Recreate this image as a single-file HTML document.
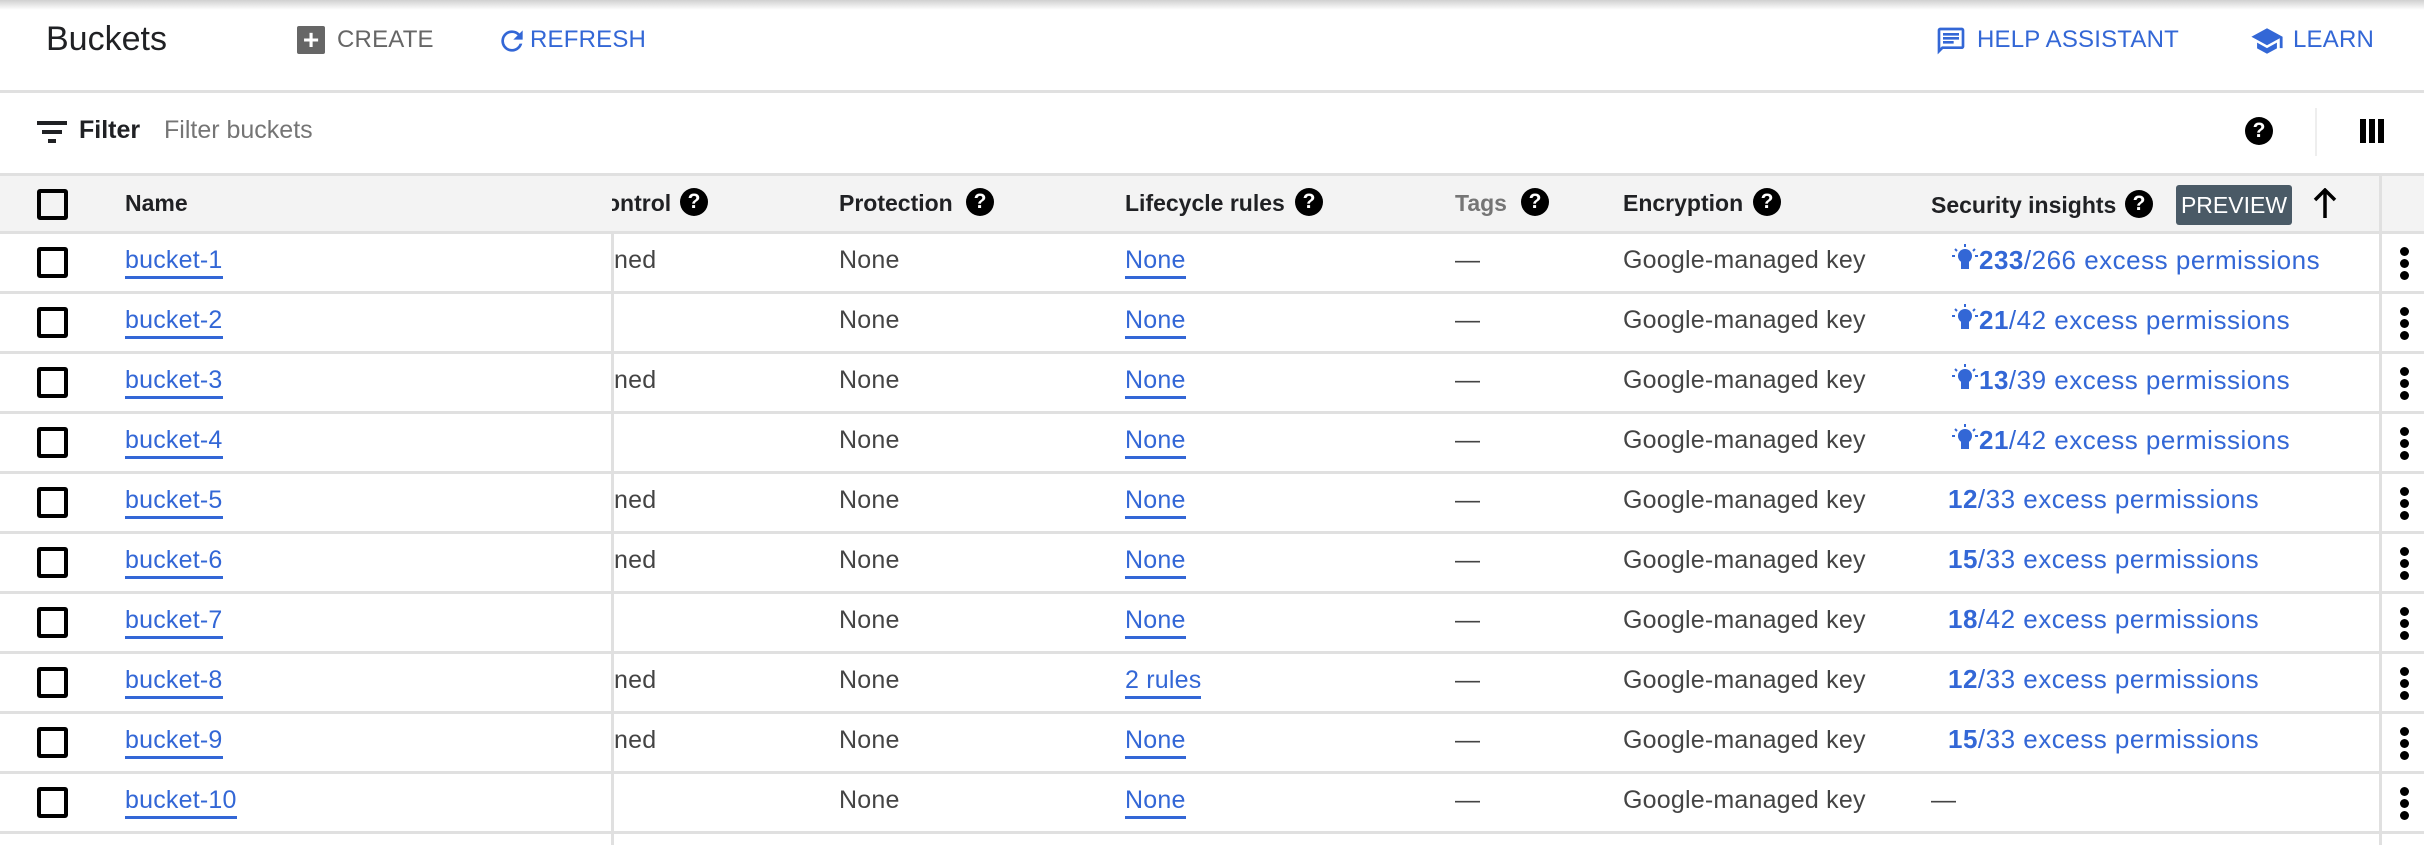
<!DOCTYPE html>
<html><head><meta charset="utf-8"><style>
*{box-sizing:border-box;margin:0;padding:0}
body{width:2424px;height:845px;overflow:hidden;background:#fff;font-family:"Liberation Sans",Arial,sans-serif;position:relative;color:#3c4043}
.a{position:absolute;white-space:nowrap}
.shadow{position:absolute;left:0;top:0;width:2424px;height:10px;background:linear-gradient(#d0d0d0,rgba(255,255,255,0))}
.hl{position:absolute;left:0;height:3px;width:2424px;background:#e0e0e0}
.blue{color:#3367d6}
.btn{font-size:24px;top:26px;letter-spacing:0.2px}
.q{position:absolute;width:28px;height:28px;border-radius:50%;background:#000;color:#fff;font-weight:bold;font-size:21px;text-align:center;line-height:28px}
.th{position:absolute;font-size:23px;font-weight:bold;color:#202124;top:190px}
.cb{position:absolute;left:37px;width:31px;height:31px;border:4px solid #000;border-radius:3px}
.row{position:absolute;left:0;width:2424px;height:60px;border-bottom:3px solid #e0e0e0}
.t{position:absolute;top:12px;font-size:25px;color:#444;white-space:nowrap;letter-spacing:0.2px}
.lk{color:#3367d6;border-bottom:3px solid #3367d6;padding-bottom:2px}
.sec{position:absolute;top:10px;font-size:26px;color:#3367d6;white-space:nowrap;letter-spacing:0.5px}
.keb{position:absolute;left:2400px;top:13px;width:10px}
.keb i{display:block;width:9px;height:9px;border-radius:50%;background:#000;margin-bottom:3px}
</style></head><body>
<div class="shadow"></div>
<div class="a" style="left:46px;top:20px;font-size:34px;color:#202124">Buckets</div>
<div class="a" style="left:297px;top:26px;width:28px;height:28px;background:#666;border-radius:2px;color:#fff;font-weight:bold;font-size:28px;line-height:28px;text-align:center">+</div>
<div class="a btn" style="left:337px;color:#666">CREATE</div>
<svg class="a" style="left:496px;top:24px" width="32" height="34" viewBox="0 0 24 24"><path d="M17.65 6.35A7.96 7.96 0 0 0 12 4a8 8 0 1 0 7.73 10h-2.08A6 6 0 1 1 12 6c1.66 0 3.14.69 4.22 1.78L13 11h7V4l-2.35 2.35z" fill="#3367d6"/></svg>
<div class="a btn blue" style="left:530px">REFRESH</div>
<svg class="a" style="left:1935px;top:24px" width="32" height="34" viewBox="0 0 24 24"><path d="M20 2H4c-1.1 0-2 .9-2 2v18l4-4h14c1.1 0 2-.9 2-2V4c0-1.1-.9-2-2-2zm0 14H5.2L4 17.2V4h16v12zM6 12h8v2H6zm0-3h12v2H6zm0-3h12v2H6z" fill="#3367d6"/></svg>
<div class="a btn blue" style="left:1977px">HELP ASSISTANT</div>
<svg class="a" style="left:2250px;top:24px" width="34" height="34" viewBox="0 0 24 24"><path d="M5 13.18v4L12 21l7-3.82v-4L12 17l-7-3.82zM12 3 1 9l11 6 9-4.91V17h2V9L12 3z" fill="#3367d6"/></svg>
<div class="a btn blue" style="left:2293px">LEARN</div>
<div class="hl" style="top:90px"></div>
<svg class="a" style="left:37px;top:117px" width="32" height="28" viewBox="0 0 32 28"><rect x="0" y="4" width="30" height="4" fill="#202124"/><rect x="5" y="13" width="20" height="4" fill="#202124"/><rect x="11" y="22" width="8" height="4" fill="#202124"/></svg>
<div class="a" style="left:79px;top:116px;font-size:25px;font-weight:bold;color:#202124">Filter</div>
<div class="a" style="left:164px;top:116px;font-size:25px;color:#757575">Filter buckets</div>
<div class="q" style="left:2245px;top:117px">?</div>
<div class="a" style="left:2315px;top:108px;width:2px;height:48px;background:#eee"></div>
<div class="a" style="left:2360px;top:119px;width:24px;height:24px;background:repeating-linear-gradient(90deg,#000 0 6px,#fff 6px 9px)"></div>
<div class="a" style="left:0;top:173px;width:2424px;height:61px;background:#f3f3f3;border-top:3px solid #e0e0e0;border-bottom:3px solid #e0e0e0"></div>
<div class="cb" style="top:189px"></div>
<div class="th" style="left:125px">Name</div>
<div class="th" style="left:606px">ontrol</div><div class="a" style="left:596px;top:176px;width:16px;height:55px;background:#f3f3f3"></div><div class="q" style="left:680px;top:188px">?</div>
<div class="th" style="left:839px">Protection</div><div class="q" style="left:966px;top:188px">?</div>
<div class="th" style="left:1125px">Lifecycle rules</div><div class="q" style="left:1295px;top:188px">?</div>
<div class="th" style="left:1455px;color:#757575">Tags</div><div class="q" style="left:1521px;top:188px">?</div>
<div class="th" style="left:1623px">Encryption</div><div class="q" style="left:1753px;top:188px">?</div>
<div class="th" style="left:1931px;top:192px">Security insights</div><div class="q" style="left:2125px;top:190px">?</div>
<div class="a" style="left:2176px;top:185px;width:116px;height:40px;background:#4a5a66;border-radius:3px;color:#fff;font-size:23px;line-height:40px;text-align:center">PREVIEW</div>
<svg class="a" style="left:2312px;top:188px" width="26" height="30" viewBox="0 0 26 30"><path d="M13 2v28M3 12 13 2l10 10" stroke="#000" stroke-width="3.5" fill="none"/></svg>
<div class="a" style="left:2379px;top:173px;width:3px;height:672px;background:#e0e0e0"></div>
<div class="a" style="left:611px;top:234px;width:3px;height:611px;background:#e0e0e0;z-index:5"></div>
<div class="row" style="top:234px"><div class="cb" style="top:13px"></div><div class="t" style="left:125px"><span class="lk">bucket-1</span></div><div class="t" style="left:614px">ned</div><div class="t" style="left:839px">None</div><div class="t" style="left:1125px"><span class="lk">None</span></div><div class="t" style="left:1455px">—</div><div class="t" style="left:1623px">Google-managed key</div><div class="sec" style="left:1951px"><svg width="28" height="28" viewBox="0 0 26 28" style="vertical-align:-3px"><circle cx="13" cy="12" r="7" fill="#3367d6"/><rect x="9" y="17" width="8" height="8" fill="#3367d6"/><path d="M13 0v3M3 5l2 2M23 5l-2 2M0 12h3M23 12h3" stroke="#3367d6" stroke-width="2"/></svg><b>233</b>/266 excess permissions</div><div class="keb"><i></i><i></i><i></i></div></div>
<div class="row" style="top:294px"><div class="cb" style="top:13px"></div><div class="t" style="left:125px"><span class="lk">bucket-2</span></div><div class="t" style="left:839px">None</div><div class="t" style="left:1125px"><span class="lk">None</span></div><div class="t" style="left:1455px">—</div><div class="t" style="left:1623px">Google-managed key</div><div class="sec" style="left:1951px"><svg width="28" height="28" viewBox="0 0 26 28" style="vertical-align:-3px"><circle cx="13" cy="12" r="7" fill="#3367d6"/><rect x="9" y="17" width="8" height="8" fill="#3367d6"/><path d="M13 0v3M3 5l2 2M23 5l-2 2M0 12h3M23 12h3" stroke="#3367d6" stroke-width="2"/></svg><b>21</b>/42 excess permissions</div><div class="keb"><i></i><i></i><i></i></div></div>
<div class="row" style="top:354px"><div class="cb" style="top:13px"></div><div class="t" style="left:125px"><span class="lk">bucket-3</span></div><div class="t" style="left:614px">ned</div><div class="t" style="left:839px">None</div><div class="t" style="left:1125px"><span class="lk">None</span></div><div class="t" style="left:1455px">—</div><div class="t" style="left:1623px">Google-managed key</div><div class="sec" style="left:1951px"><svg width="28" height="28" viewBox="0 0 26 28" style="vertical-align:-3px"><circle cx="13" cy="12" r="7" fill="#3367d6"/><rect x="9" y="17" width="8" height="8" fill="#3367d6"/><path d="M13 0v3M3 5l2 2M23 5l-2 2M0 12h3M23 12h3" stroke="#3367d6" stroke-width="2"/></svg><b>13</b>/39 excess permissions</div><div class="keb"><i></i><i></i><i></i></div></div>
<div class="row" style="top:414px"><div class="cb" style="top:13px"></div><div class="t" style="left:125px"><span class="lk">bucket-4</span></div><div class="t" style="left:839px">None</div><div class="t" style="left:1125px"><span class="lk">None</span></div><div class="t" style="left:1455px">—</div><div class="t" style="left:1623px">Google-managed key</div><div class="sec" style="left:1951px"><svg width="28" height="28" viewBox="0 0 26 28" style="vertical-align:-3px"><circle cx="13" cy="12" r="7" fill="#3367d6"/><rect x="9" y="17" width="8" height="8" fill="#3367d6"/><path d="M13 0v3M3 5l2 2M23 5l-2 2M0 12h3M23 12h3" stroke="#3367d6" stroke-width="2"/></svg><b>21</b>/42 excess permissions</div><div class="keb"><i></i><i></i><i></i></div></div>
<div class="row" style="top:474px"><div class="cb" style="top:13px"></div><div class="t" style="left:125px"><span class="lk">bucket-5</span></div><div class="t" style="left:614px">ned</div><div class="t" style="left:839px">None</div><div class="t" style="left:1125px"><span class="lk">None</span></div><div class="t" style="left:1455px">—</div><div class="t" style="left:1623px">Google-managed key</div><div class="sec" style="left:1948px"><b>12</b>/33 excess permissions</div><div class="keb"><i></i><i></i><i></i></div></div>
<div class="row" style="top:534px"><div class="cb" style="top:13px"></div><div class="t" style="left:125px"><span class="lk">bucket-6</span></div><div class="t" style="left:614px">ned</div><div class="t" style="left:839px">None</div><div class="t" style="left:1125px"><span class="lk">None</span></div><div class="t" style="left:1455px">—</div><div class="t" style="left:1623px">Google-managed key</div><div class="sec" style="left:1948px"><b>15</b>/33 excess permissions</div><div class="keb"><i></i><i></i><i></i></div></div>
<div class="row" style="top:594px"><div class="cb" style="top:13px"></div><div class="t" style="left:125px"><span class="lk">bucket-7</span></div><div class="t" style="left:839px">None</div><div class="t" style="left:1125px"><span class="lk">None</span></div><div class="t" style="left:1455px">—</div><div class="t" style="left:1623px">Google-managed key</div><div class="sec" style="left:1948px"><b>18</b>/42 excess permissions</div><div class="keb"><i></i><i></i><i></i></div></div>
<div class="row" style="top:654px"><div class="cb" style="top:13px"></div><div class="t" style="left:125px"><span class="lk">bucket-8</span></div><div class="t" style="left:614px">ned</div><div class="t" style="left:839px">None</div><div class="t" style="left:1125px"><span class="lk">2 rules</span></div><div class="t" style="left:1455px">—</div><div class="t" style="left:1623px">Google-managed key</div><div class="sec" style="left:1948px"><b>12</b>/33 excess permissions</div><div class="keb"><i></i><i></i><i></i></div></div>
<div class="row" style="top:714px"><div class="cb" style="top:13px"></div><div class="t" style="left:125px"><span class="lk">bucket-9</span></div><div class="t" style="left:614px">ned</div><div class="t" style="left:839px">None</div><div class="t" style="left:1125px"><span class="lk">None</span></div><div class="t" style="left:1455px">—</div><div class="t" style="left:1623px">Google-managed key</div><div class="sec" style="left:1948px"><b>15</b>/33 excess permissions</div><div class="keb"><i></i><i></i><i></i></div></div>
<div class="row" style="top:774px"><div class="cb" style="top:13px"></div><div class="t" style="left:125px"><span class="lk">bucket-10</span></div><div class="t" style="left:839px">None</div><div class="t" style="left:1125px"><span class="lk">None</span></div><div class="t" style="left:1455px">—</div><div class="t" style="left:1623px">Google-managed key</div><div class="t" style="left:1931px">—</div><div class="keb"><i></i><i></i><i></i></div></div>
</body></html>
